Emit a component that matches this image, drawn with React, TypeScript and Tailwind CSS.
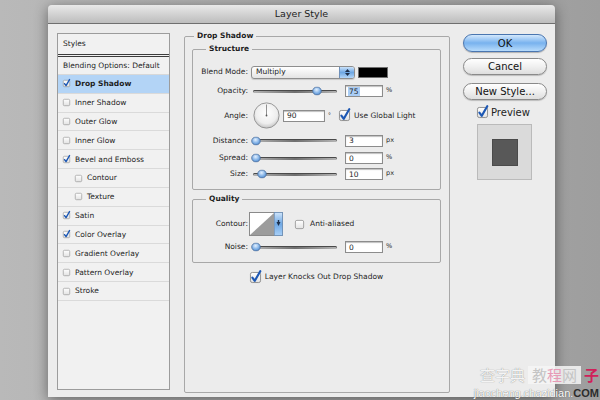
import React from 'react';

const ui = "font-['DejaVu_Sans',sans-serif]";

function Check({ size, checked }: { size: number; checked?: boolean }) {
  return (
    <svg width={size} height={size} viewBox="0 0 12 12" className="shrink-0 overflow-visible">
      <defs>
        <linearGradient id="cbg" x1="0" y1="0" x2="0" y2="1">
          <stop offset="0" stopColor="#ffffff" />
          <stop offset="1" stopColor="#e2e2e2" />
        </linearGradient>
      </defs>
      <rect x="0.5" y="0.5" width="11" height="11" rx="2" fill="url(#cbg)" stroke="#8a8a8a" />
      {checked && (
        <path
          d="M2.6 6.2 L5.2 9.6 L11.2 -0.8"
          stroke="#1d58b4"
          strokeWidth="2.4"
          fill="none"
          strokeLinecap="round"
          strokeLinejoin="round"
        />
      )}
    </svg>
  );
}

function Slider({ at }: { at: number }) {
  return (
    <div className="relative ml-[5px] flex h-full w-[84px] shrink-0 items-center">
      <div className="h-[3px] w-full rounded-full bg-gradient-to-r from-[#b5b5b5] via-[#6f6f6f] to-[#b5b5b5] shadow-[inset_0_1px_0_#4a4a4a]" />
      <svg width="10" height="9" viewBox="0 0 10 9" className="absolute top-1/2 -translate-y-1/2" style={{ left: at - 5 }}>
        <defs>
          <radialGradient id="thumb" cx="0.45" cy="0.35" r="0.7">
            <stop offset="0" stopColor="#e4f1ff" />
            <stop offset="0.6" stopColor="#7fb0e6" />
            <stop offset="1" stopColor="#4a82c6" />
          </radialGradient>
        </defs>
        <ellipse cx="5" cy="4.5" rx="4.3" ry="4" fill="url(#thumb)" stroke="#4d6f9c" strokeWidth="0.8" />
      </svg>
    </div>
  );
}

function Field({ value, w = 38, selected }: { value: string; w?: number; selected?: boolean }) {
  return (
    <div
      className="flex h-[12px] shrink-0 items-center border border-[#8c8c8c] bg-white pl-[2px] shadow-[inset_0_1px_1px_rgba(0,0,0,0.25)]"
      style={{ width: w }}
    >
      <span className={selected ? 'bg-[#a9cdf5] px-[1px] leading-[9px]' : 'px-[1px] leading-[9px]'}>{value}</span>
    </div>
  );
}

function Label({ children }: { children: React.ReactNode }) {
  return <span className="w-[55px] shrink-0 text-right">{children}</span>;
}

function SliderRow({ label, at, value, unit, h, selected }: { label: string; at: number; value: string; unit: string; h: string; selected?: boolean }) {
  return (
    <div className={`flex items-center ${h}`}>
      <Label>{label}</Label>
      <Slider at={at} />
      <div className="ml-[8px]">
        <Field value={value} selected={selected} />
      </div>
      <span className="ml-[3px] text-[6.5px]">{unit}</span>
    </div>
  );
}

const styles: { name: string; checked?: boolean; sub?: boolean; active?: boolean }[] = [
  { name: 'Drop Shadow', checked: true, active: true },
  { name: 'Inner Shadow' },
  { name: 'Outer Glow' },
  { name: 'Inner Glow' },
  { name: 'Bevel and Emboss', checked: true },
  { name: 'Contour', sub: true },
  { name: 'Texture', sub: true },
  { name: 'Satin', checked: true },
  { name: 'Color Overlay', checked: true },
  { name: 'Gradient Overlay' },
  { name: 'Pattern Overlay' },
  { name: 'Stroke' },
];

function StyleList() {
  return (
    <div className="mt-[9px] flex h-[357px] w-[113px] shrink-0 flex-col border border-[#9c9c9c] bg-[#f1f1f1]">
      <div className="flex h-[20px] items-center pl-[5px]">Styles</div>
      <div className="border-b-[3px] border-double border-[#3c3c3c]" />
      <div className="flex h-[18px] items-center border-b border-[#d8d8d8] pl-[5px]">Blending Options: Default</div>
      {styles.map((s) => (
        <div
          key={s.name}
          className={`flex h-[18.83px] items-center gap-[5px] border-b border-[#dadada] ${s.sub ? 'pl-[17px]' : 'pl-[5px]'} ${s.active ? 'bg-[#b3d4f6] font-bold' : ''}`}
        >
          <Check size={7} checked={s.checked} />
          <span>{s.name}</span>
        </div>
      ))}
    </div>
  );
}

function Dial() {
  return (
    <svg width="27" height="27" viewBox="0 0 27 27" className="ml-[5px] shrink-0">
      <defs>
        <radialGradient id="dial" cx="0.5" cy="0.4" r="0.6">
          <stop offset="0" stopColor="#ffffff" />
          <stop offset="0.7" stopColor="#eeeeee" />
          <stop offset="1" stopColor="#c4c4c4" />
        </radialGradient>
      </defs>
      <circle cx="13.5" cy="13.5" r="12.6" fill="url(#dial)" stroke="#8e8e8e" strokeWidth="0.9" />
      <line x1="13.5" y1="13.5" x2="13.5" y2="2.5" stroke="#777" strokeWidth="0.8" />
      <circle cx="13.5" cy="13.5" r="0.9" fill="#555" />
    </svg>
  );
}

function ContourPicker() {
  return (
    <svg width="34" height="24" viewBox="0 0 34 24" className="ml-[1px] shrink-0">
      <defs>
        <linearGradient id="drop" x1="0" y1="0" x2="0" y2="1">
          <stop offset="0" stopColor="#cfe5fb" />
          <stop offset="0.5" stopColor="#6fa8e4" />
          <stop offset="1" stopColor="#a9d0f7" />
        </linearGradient>
      </defs>
      <rect x="0.5" y="0.5" width="33" height="23" fill="#ffffff" stroke="#8a8a8a" />
      <polygon points="1,23 25,1 25,23" fill="#9c9c9c" />
      <rect x="25.5" y="0.5" width="8" height="23" fill="url(#drop)" stroke="#6c8fb8" strokeWidth="0.8" />
      <polygon points="27.5,10 31.5,10 29.5,14" fill="#1d2f4a" />
      <rect x="28.8" y="8" width="1.4" height="2" fill="#1d2f4a" />
    </svg>
  );
}

function Watermark() {
  return (
    <div className="absolute bottom-[1px] right-[1px] flex flex-col items-end">
      <div className="flex h-[20px] items-center gap-[3px] font-['Noto_Sans_CJK_SC',sans-serif] text-[15px] leading-[18px]">
        <span className="text-[#f4f4f4] [text-shadow:0_0_1px_#777]">查字典</span>
        <span className="bg-[#f6f6f6]/85 px-[4px] text-[#c4c4c4]">
          教<span className="text-[#e79ab6]">程</span>网
        </span>
        <span className="font-bold text-[#d0205a]">子</span>
      </div>
      <div className="mt-[2px] font-['Liberation_Sans',sans-serif] text-[11px] leading-[12px] text-white [text-shadow:0_0_1px_#444]">
        jiaocheng.chazidian.<span className="font-bold text-[#2c2c2c] [text-shadow:none]">COM</span>
      </div>
    </div>
  );
}

export default function App() {
  return (
    <div className={`relative h-[400px] w-[600px] overflow-hidden bg-gradient-to-r from-[#b9b9b9] via-[#acacac] to-[#9e9e9e] pl-[48px] pt-[5px] ${ui} text-[7.5px] text-[#1e1e1e]`}>
      <div className="flex h-[392px] w-[507px] flex-col rounded-t-[4px] shadow-[0_3px_14px_rgba(0,0,0,0.45)]">
        <div className="flex h-[19px] shrink-0 items-center justify-center rounded-t-[4px] border-b border-[#6f6f6f] bg-gradient-to-b from-[#e9e9e9] to-[#bdbdbd] text-[9.5px] text-[#222]">
          Layer Style
        </div>
        <div className="flex flex-1 items-start bg-[#ececec] pl-[9px]">
          <StyleList />

          <fieldset className="ml-[14px] mt-[7px] h-[362px] w-[266px] shrink-0 rounded-[2px] border border-[#a8a8a8]">
            <legend className="ml-[9px] px-[3px] font-bold leading-[10px]">Drop Shadow</legend>
            <div className="pl-[7px] pr-[8px] pt-[3px]">
              <fieldset className="rounded-[2px] border border-[#a8a8a8]">
                <legend className="ml-[13px] px-[3px] font-bold leading-[10px]">Structure</legend>
                <div className="flex flex-col pb-[7px] pt-[8px]">
                  <div className="flex h-[20px] items-center">
                    <Label>Blend Mode:</Label>
                    <div className="ml-[3px] flex h-[13px] w-[104px] items-stretch overflow-hidden rounded-[3px] border border-[#8e8e8e] bg-gradient-to-b from-white to-[#e4e4e4] shadow-[0_1px_1px_rgba(0,0,0,0.15)]">
                      <span className="flex flex-1 items-center pl-[4px]">Multiply</span>
                      <span className="flex w-[15px] flex-col items-center justify-center gap-[1px] border-l border-[#6e8fb8] bg-gradient-to-b from-[#cbe3fb] via-[#6ea7e3] to-[#b4d7f9]">
                        <svg width="5" height="3" viewBox="0 0 5 3"><polygon points="0,3 5,3 2.5,0" fill="#1d2f4a" /></svg>
                        <svg width="5" height="3" viewBox="0 0 5 3"><polygon points="0,0 5,0 2.5,3" fill="#1d2f4a" /></svg>
                      </span>
                    </div>
                    <div className="ml-[3px] h-[11px] w-[30px] border border-[#707070] bg-black" />
                  </div>
                  <SliderRow label="Opacity:" at={64} value="75" unit="%" h="h-[18px]" selected />
                  <div className="flex h-[31px] items-center">
                    <Label>Angle:</Label>
                    <Dial />
                    <div className="ml-[3px]">
                      <Field value="90" w={42} />
                    </div>
                    <span className="w-[14px] self-start pl-[3px] pt-[10px] text-[6px]">°</span>
                    <Check size={11} checked />
                    <span className="ml-[4px]">Use Global Light</span>
                  </div>
                  <SliderRow label="Distance:" at={3} value="3" unit="px" h="h-[19px]" />
                  <SliderRow label="Spread:" at={3} value="0" unit="%" h="h-[16px]" />
                  <SliderRow label="Size:" at={9} value="10" unit="px" h="h-[16px]" />
                </div>
              </fieldset>

              <fieldset className="mt-[4px] rounded-[2px] border border-[#a8a8a8]">
                <legend className="ml-[13px] px-[3px] font-bold leading-[10px]">Quality</legend>
                <div className="flex flex-col pb-[5px] pt-[7px]">
                  <div className="flex h-[26px] items-center">
                    <Label>Contour:</Label>
                    <ContourPicker />
                    <div className="ml-[12px] flex items-center gap-[6px]">
                      <Check size={9} />
                      <span>Anti-aliased</span>
                    </div>
                  </div>
                  <SliderRow label="Noise:" at={3} value="0" unit="%" h="h-[20px]" />
                </div>
              </fieldset>

              <div className="mt-[7px] flex h-[14px] items-center justify-center gap-[4px]">
                <Check size={11} checked />
                <span>Layer Knocks Out Drop Shadow</span>
              </div>
            </div>
          </fieldset>

          <div className="ml-[13px] mt-[10px] flex w-[84px] shrink-0 flex-col text-[10px]">
            <button className="flex h-[18px] items-center justify-center rounded-full border border-[#4a76b0] bg-gradient-to-b from-[#d3e8fc] via-[#78b2ee] to-[#b7dbfb] text-[#111] shadow-[0_1px_1px_rgba(0,0,0,0.25)]">
              OK
            </button>
            <button className="mt-[6px] flex h-[17px] items-center justify-center rounded-full border border-[#8a8a8a] bg-gradient-to-b from-white via-[#f0f0f0] to-[#dedede] text-[#111] shadow-[0_1px_1px_rgba(0,0,0,0.2)]">
              Cancel
            </button>
            <button className="mt-[8px] flex h-[17px] items-center justify-center rounded-full border border-[#8a8a8a] bg-gradient-to-b from-white via-[#f0f0f0] to-[#dedede] text-[#111] shadow-[0_1px_1px_rgba(0,0,0,0.2)]">
              New Style...
            </button>
            <div className="mt-[7px] flex h-[11px] items-center gap-[3px] pl-[14px]">
              <Check size={11} checked />
              <span>Preview</span>
            </div>
            <div className="ml-[14px] mt-[6px] flex h-[56px] w-[55px] items-center justify-center border border-[#bababa] bg-[#dadada]">
              <div className="h-[27px] w-[26px] border border-[#4a4a4a] bg-[#585858]" />
            </div>
          </div>
        </div>
      </div>
      <Watermark />
    </div>
  );
}
